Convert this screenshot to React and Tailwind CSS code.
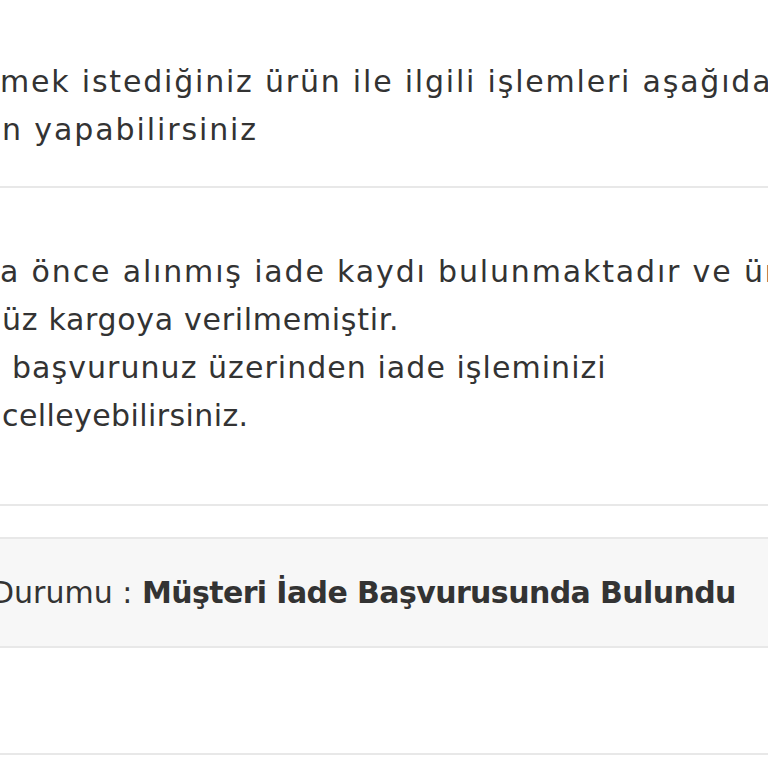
export default function App() {
  const line = "whitespace-nowrap h-[48px] leading-[48px]";
  return (
    <div
      className="w-[768px] h-[768px] overflow-hidden bg-white text-[#333333] text-[30px]"
      style={{ fontFamily: "'DejaVu Sans', 'Noto Sans', sans-serif" }}
    >
      <div className="pt-[58px] pb-[32px]">
        <div className={line + " tracking-[1.8px]"}>mek istediğiniz ürün ile ilgili işlemleri aşağıdaki</div>
        <div className={line + " pl-[2px] tracking-[1.9px]"}>n yapabilirsiniz</div>
      </div>
      <div className="h-[2px] bg-[#e8e8e8]" />
      <div className="pt-[60px] pb-[64px]">
        <div className={line + " tracking-[1.84px]"}>a önce alınmış iade kaydı bulunmaktadır ve ürününüz</div>
        <div className={line + " pl-[2px] tracking-[0.7px]"}>üz kargoya verilmemiştir.</div>
        <div className={line + " pl-[12px] tracking-[1.05px]"}>başvurunuz üzerinden iade işleminizi</div>
        <div className={line + " pl-[2px] tracking-[0.4px]"}>celleyebilirsiniz.</div>
      </div>
      <div className="h-[2px] bg-[#e8e8e8]" />
      <div className="h-[31px]" />
      <div className="h-[111px] bg-[#f7f7f7] border-y-2 border-[#e8e8e8] flex items-center">
        <div className="whitespace-nowrap -ml-[9px]">
          Durumu : <span className="font-bold tracking-[-0.6px]">Müşteri İade Başvurusunda Bulundu</span>
        </div>
      </div>
      <div className="h-[105px]" />
      <div className="h-[2px] bg-[#e8e8e8]" />
    </div>
  );
}
